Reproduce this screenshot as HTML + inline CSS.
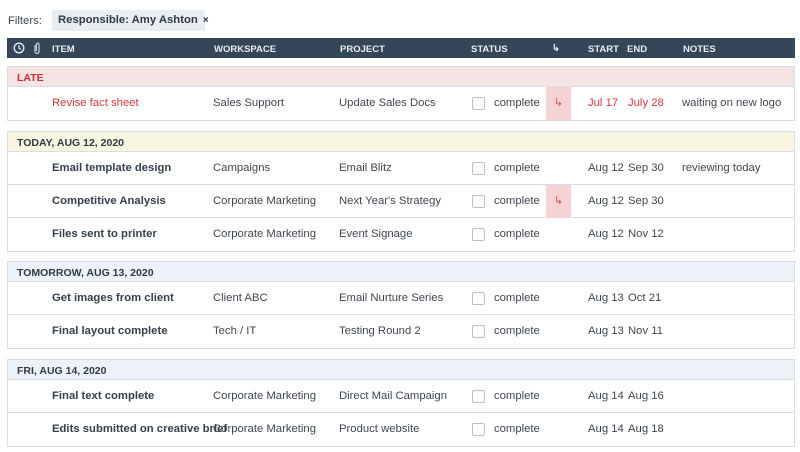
<!DOCTYPE html>
<html><head><meta charset="utf-8"><style>
*{margin:0;padding:0;box-sizing:border-box}
body{width:800px;height:452px;background:#fff;font-family:"Liberation Sans",sans-serif;font-size:11.3px;color:#3f4652;position:relative;overflow:hidden}
.a{position:absolute;white-space:nowrap}
.hdr{position:absolute;left:7px;width:788px;height:20px;background:#354659;color:#e8edf2;font-size:9.5px;font-weight:bold}
.hdr span{position:absolute;top:5px}
.grp{position:absolute;left:7px;width:788px;border:1px solid #d9dee4}
.gh{height:20px;border-bottom:1px solid #d9dee4;font-weight:bold;font-size:10.5px;padding:5px 0 0 9px;color:#2f3a48}
.row{position:relative;height:33px;border-bottom:1px solid #d9dee4}
.row:last-child{border-bottom:none}
.row span{position:absolute;top:10px;white-space:nowrap}
.it{left:44px;font-weight:bold;color:#36404d}
.ws{left:205px}.pj{left:331px}
.cb{left:464px!important;top:10px!important;width:13px;height:13px;border:1px solid #b9c0c8;border-radius:2px;background:#fff}
.st{left:486px}.sd{left:580px}.ed{left:620px}.nt{left:674px}
.arr{position:absolute;left:538px;top:0;width:25px;height:33px;background:#f5d3d5;color:#e05050;text-align:center;padding-top:9px;font-size:11px}
.red{color:#d9363a!important}
</style></head><body>
<div class="a" style="left:8px;top:15px;font-size:11.3px">Filters:</div>
<div class="a" style="left:52px;top:10px;height:21px;width:153px;background:#e9edf1;font-weight:bold;padding:4px 0 0 6px;color:#2f3a48">Responsible: Amy Ashton <span style="font-weight:bold;font-size:10px;margin-left:2px">×</span></div>
<div class="hdr" style="top:38px">
<span style="left:6px;top:4px"><svg width="12" height="12" viewBox="0 0 12 12"><circle cx="6" cy="6" r="4.8" fill="none" stroke="#e8edf2" stroke-width="1.3"/><path d="M6 3.2V6.2L8 7.4" fill="none" stroke="#e8edf2" stroke-width="1.2"/></svg></span>
<span style="left:26px;top:4px"><svg width="8" height="12" viewBox="0 0 8 12"><path d="M2 3V9.5a2 2 0 0 0 4 0V2.5a1.3 1.3 0 0 0-2.6 0V9" fill="none" stroke="#c8d0d8" stroke-width="1.2"/></svg></span>
<span style="left:45px;top:6px">ITEM</span><span style="left:207px;top:6px">WORKSPACE</span><span style="left:333px;top:6px">PROJECT</span><span style="left:464px;top:6px">STATUS</span><span style="left:545px;top:5px">↳</span><span style="left:581px;top:6px">START</span><span style="left:620px;top:6px">END</span><span style="left:676px;top:6px">NOTES</span></div>

<div class="grp" style="top:66px"><div class="gh" style="background:#f6e3e4;color:#d02c30">LATE</div>
<div class="row"><span class="it red" style="font-weight:normal">Revise fact sheet</span><span class="ws">Sales Support</span><span class="pj">Update Sales Docs</span><span class="cb"></span><span class="st">complete</span><div class="arr">↳</div><span class="sd red">Jul 17</span><span class="ed red">July 28</span><span class="nt">waiting on new logo</span></div></div>

<div class="grp" style="top:131px"><div class="gh" style="background:#f8f5e1">TODAY, AUG 12, 2020</div>
<div class="row"><span class="it">Email template design</span><span class="ws">Campaigns</span><span class="pj">Email Blitz</span><span class="cb"></span><span class="st">complete</span><span class="sd">Aug 12</span><span class="ed">Sep 30</span><span class="nt">reviewing today</span></div>
<div class="row"><span class="it">Competitive Analysis</span><span class="ws">Corporate Marketing</span><span class="pj">Next Year's Strategy</span><span class="cb"></span><span class="st">complete</span><div class="arr">↳</div><span class="sd">Aug 12</span><span class="ed">Sep 30</span></div>
<div class="row"><span class="it">Files sent to printer</span><span class="ws">Corporate Marketing</span><span class="pj">Event Signage</span><span class="cb"></span><span class="st">complete</span><span class="sd">Aug 12</span><span class="ed">Nov 12</span></div></div>

<div class="grp" style="top:261px"><div class="gh" style="background:#edf2f8">TOMORROW, AUG 13, 2020</div>
<div class="row"><span class="it">Get images from client</span><span class="ws">Client ABC</span><span class="pj">Email Nurture Series</span><span class="cb"></span><span class="st">complete</span><span class="sd">Aug 13</span><span class="ed">Oct 21</span></div>
<div class="row"><span class="it">Final layout complete</span><span class="ws">Tech / IT</span><span class="pj">Testing Round 2</span><span class="cb"></span><span class="st">complete</span><span class="sd">Aug 13</span><span class="ed">Nov 11</span></div></div>

<div class="grp" style="top:359px"><div class="gh" style="background:#edf2f8">FRI, AUG 14, 2020</div>
<div class="row"><span class="it">Final text complete</span><span class="ws">Corporate Marketing</span><span class="pj">Direct Mail Campaign</span><span class="cb"></span><span class="st">complete</span><span class="sd">Aug 14</span><span class="ed">Aug 16</span></div>
<div class="row"><span class="it">Edits submitted on creative brief</span><span class="ws">Corporate Marketing</span><span class="pj">Product website</span><span class="cb"></span><span class="st">complete</span><span class="sd">Aug 14</span><span class="ed">Aug 18</span></div></div>
</body></html>
